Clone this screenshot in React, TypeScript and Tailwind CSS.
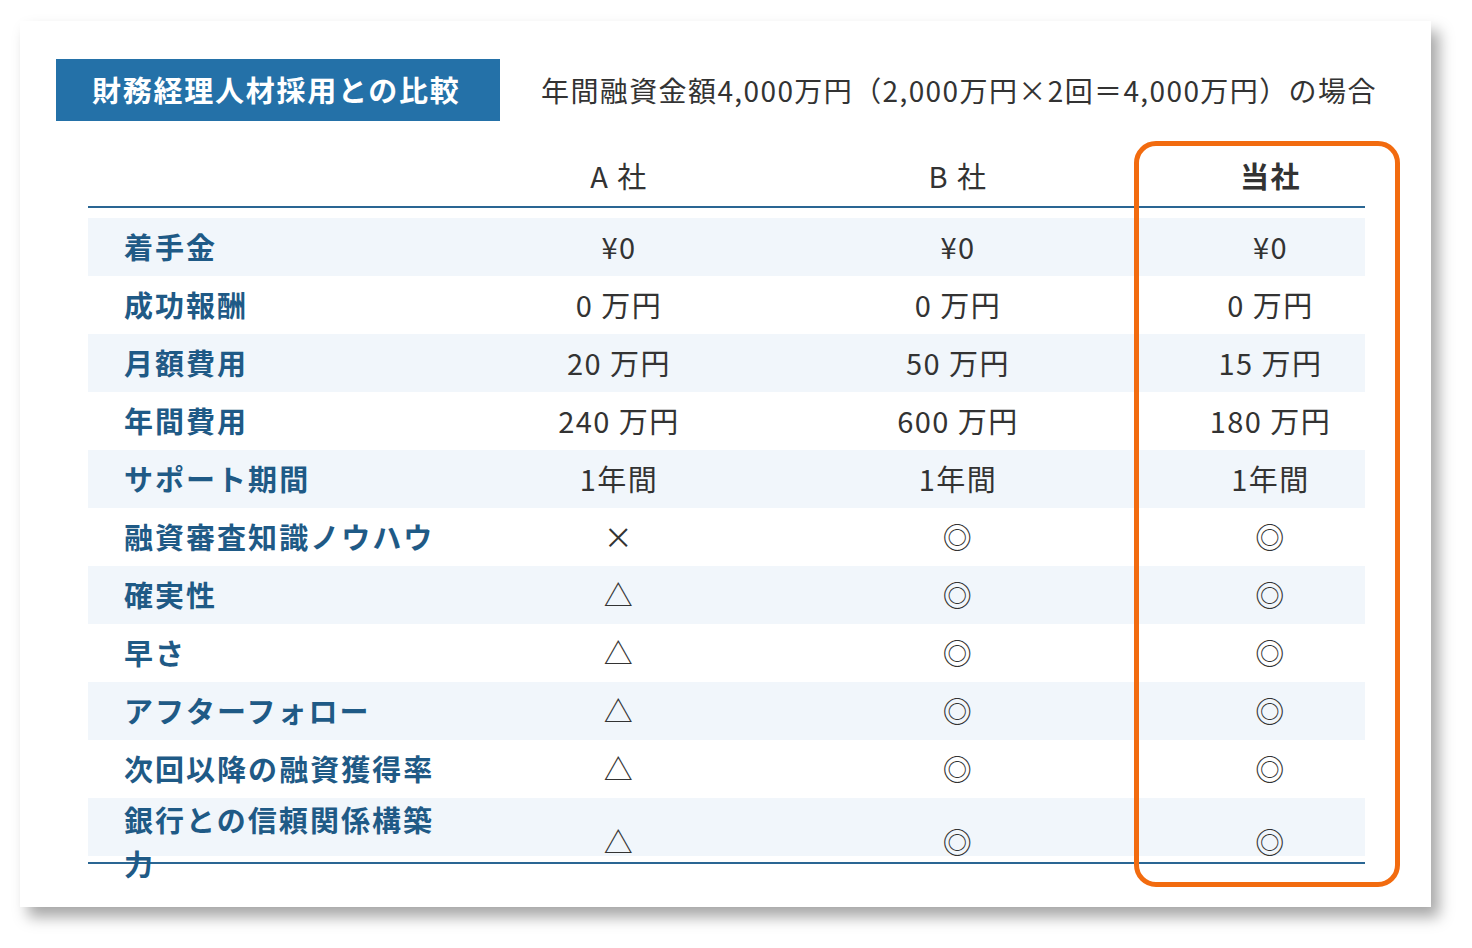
const rows: [string, string, string, string][] = [
  ["着手金", "¥0", "¥0", "¥0"],
  ["成功報酬", "0 万円", "0 万円", "0 万円"],
  ["月額費用", "20 万円", "50 万円", "15 万円"],
  ["年間費用", "240 万円", "600 万円", "180 万円"],
  ["サポート期間", "1年間", "1年間", "1年間"],
  ["融資審査知識ノウハウ", "×", "◎", "◎"],
  ["確実性", "△", "◎", "◎"],
  ["早さ", "△", "◎", "◎"],
  ["アフターフォロー", "△", "◎", "◎"],
  ["次回以降の融資獲得率", "△", "◎", "◎"],
  ["銀行との信頼関係構築力", "△", "◎", "◎"],
];

const font = { fontFamily: '"Noto Sans CJK JP", "Noto Sans", sans-serif' };

export default function App() {
  return (
    <div className="h-[948px] w-[1472px] bg-white pl-[20px] pt-[21px]" style={font}>
      <div className="relative h-[886px] w-[1411px] bg-white shadow-[8px_10px_14px_rgba(0,0,0,0.35)]">
        <div className="flex items-center pl-[36px] pt-[38px]">
          <div className="flex h-[62px] w-[444px] items-center bg-[#2471a8] pl-[36px] text-[29px] font-bold tracking-[0.06em] text-white">
            財務経理人材採用との比較
          </div>
          <div className="ml-[41px] text-[28px] tracking-[0.05em] text-[#333]">
            年間融資金額4,000万円（2,000万円×2回＝4,000万円）の場合
          </div>
        </div>
        <div className="ml-[68px] mt-[24px] w-[1277px]">
          <div className="grid h-[63px] grid-cols-[362px_338px_340px_237px] items-center border-b-2 border-[#2a6693] text-[29px] tracking-[0.05em] text-[#333]">
            <div />
            <div className="text-center">A 社</div>
            <div className="text-center">B 社</div>
            <div className="pl-[48px] text-center font-bold">当社</div>
          </div>
          <div className="mt-[10px] border-b-2 border-[#2a6693] pb-[6px]">
            {rows.map((r, i) => (
              <div
                key={r[0]}
                className={`grid h-[58px] grid-cols-[362px_338px_340px_237px] items-center text-[29px] tracking-[0.05em] text-[#333] ${i % 2 === 0 ? "bg-[#f1f6fb]" : ""}`}
              >
                <div className="pl-[36px] text-[29px] font-bold tracking-[0.07em] text-[#1f5a86]">{r[0]}</div>
                <div className="text-center">{r[1]}</div>
                <div className="text-center">{r[2]}</div>
                <div className="pl-[48px] text-center">{r[3]}</div>
              </div>
            ))}
          </div>
        </div>
        <div className="absolute left-[1114px] top-[120px] h-[746px] w-[266px] rounded-[22px] border-[5px] border-[#f26b0f]" />
      </div>
    </div>
  );
}
